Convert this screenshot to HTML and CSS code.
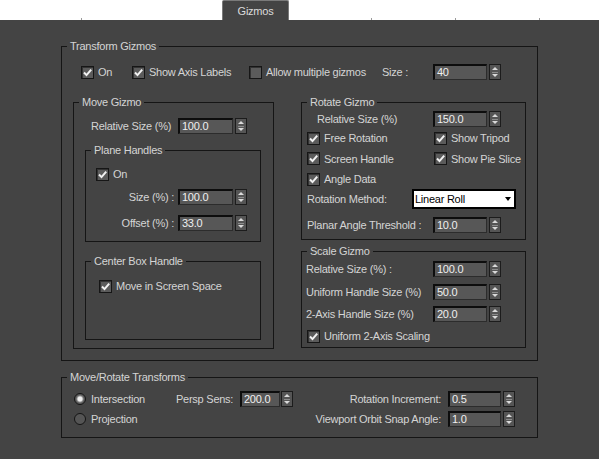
FILE: index.html
```html
<!DOCTYPE html>
<html lang="en">
<head>
  <meta charset="UTF-8">
  <title>Gizmos</title>
  <link rel="stylesheet" href="styles.css">
</head>
<body>

  <div class="tabbar">
    <i class="tick t1"></i>
    <div class="tab">Gizmos</div>
    <i class="tick t2"></i><i class="tick t3"></i><i class="tick t4"></i>
  </div>

  <div class="panel">
    <fieldset class="grp wide">
      <legend>Transform Gizmos</legend>
      <div class="tg-body">
        <div class="row top-row">
          <label class="chk c-on"><span class="box on"></span>On</label>
          <label class="chk c-axis"><span class="box on"></span>Show Axis Labels</label>
          <label class="chk c-multi"><span class="box"></span>Allow multiple gizmos</label>
          <span class="lbl size-lbl">Size :</span>
          <span class="num">40</span><span class="spin"></span>
        </div>

        <div class="cols">
          <fieldset class="grp move">
            <legend>Move Gizmo</legend>
            <div class="move-body">
              <div class="row move-rel">
                <span class="lbl">Relative Size (%)</span>
                <span class="num w55">100.0</span><span class="spin"></span>
              </div>

              <fieldset class="grp plane">
                <legend>Plane Handles</legend>
                <div class="plane-body">
                  <label class="chk"><span class="box on"></span>On</label>
                  <div class="row plane-row">
                    <span class="lbl">Size (%) :</span>
                    <span class="num w55">100.0</span><span class="spin"></span>
                  </div>
                  <div class="row plane-row second">
                    <span class="lbl">Offset (%) :</span>
                    <span class="num w55">33.0</span><span class="spin"></span>
                  </div>
                </div>
              </fieldset>

              <fieldset class="grp plane center">
                <legend>Center Box Handle</legend>
                <div class="center-body">
                  <label class="chk"><span class="box on"></span>Move in Screen Space</label>
                </div>
              </fieldset>
            </div>
          </fieldset>

          <div class="right-col">
            <fieldset class="grp rotate">
              <legend>Rotate Gizmo</legend>
              <div class="rot-body">
                <div class="row rot-rel">
                  <span class="lbl">Relative Size (%)</span>
                  <span class="num">150.0</span><span class="spin"></span>
                </div>
                <div class="chk-grid">
                  <label class="chk"><span class="box on"></span>Free Rotation</label>
                  <label class="chk"><span class="box on"></span>Show Tripod</label>
                  <label class="chk"><span class="box on"></span>Screen Handle</label>
                  <label class="chk"><span class="box on"></span>Show Pie Slice</label>
                  <label class="chk"><span class="box on"></span>Angle Data</label>
                </div>
                <div class="row rot-method">
                  <span class="lbl">Rotation Method:</span>
                  <span class="drop">Linear Roll<i class="arr"></i></span>
                </div>
                <div class="row rot-planar">
                  <span class="lbl">Planar Angle Threshold :</span>
                  <span class="num">10.0</span><span class="spin"></span>
                </div>
              </div>
            </fieldset>

            <fieldset class="grp scale">
              <legend>Scale Gizmo</legend>
              <div class="scale-body">
                <div class="row">
                  <span class="lbl">Relative Size (%) :</span>
                  <span class="num">100.0</span><span class="spin"></span>
                </div>
                <div class="row gap7">
                  <span class="lbl">Uniform Handle Size (%)</span>
                  <span class="num">50.0</span><span class="spin"></span>
                </div>
                <div class="row gap6">
                  <span class="lbl">2-Axis Handle Size (%)</span>
                  <span class="num">20.0</span><span class="spin"></span>
                </div>
                <label class="chk scale-chk"><span class="box on"></span>Uniform 2-Axis Scaling</label>
              </div>
            </fieldset>
          </div>
        </div>
      </div>
    </fieldset>

    <fieldset class="grp wide mrt">
      <legend>Move/Rotate Transforms</legend>
      <div class="mrt-body">
        <label class="rad"><span class="dot on"></span>Intersection</label>
        <span class="lbl">Persp Sens:</span>
        <span class="num w40">200.0</span><span class="spin s1"></span>
        <span class="lbl rlbl">Rotation Increment:</span>
        <span class="num w53">0.5</span><span class="spin"></span>

        <label class="rad"><span class="dot"></span>Projection</label>
        <span class="lbl rlbl r2">Viewport Orbit Snap Angle:</span>
        <span class="num w53">1.0</span><span class="spin"></span>
      </div>
    </fieldset>
  </div>

</body>
</html>
```

FILE: styles.css
```css
* { box-sizing: border-box; }
html, body {
  margin: 0;
  width: 599px; height: 459px;
  overflow: hidden;
  background: #444;
  font-family: "Liberation Sans", Arial, sans-serif;
  font-size: 11px;
  letter-spacing: -0.25px;
  color: #d4d4d4;
}

/* tab strip */
.tabbar {
  height: 20px;
  background: #fff;
  display: flex;
  align-items: flex-end;
}
.tick { display: block; width: 1px; height: 2px; background: #9a9a9a; }
.t1 { margin-left: 81px; }
.t2 { margin-left: 82px; }
.t3, .t4 { margin-left: 83px; }
.tab {
  margin-left: 140px;
  width: 67px; height: 20px;
  background: #444;
  border: 1px solid #7a7a7a;
  border-bottom: none;
  border-radius: 2px 2px 0 0;
  color: #dcdcdc;
  text-align: center;
  line-height: 20px;
}

/* groups */
.panel { padding: 19px 0 0 61px; }
.grp {
  margin: 0;
  padding: 0;
  min-width: 0;
  border: 1px solid #151515;
}
legend {
  margin-left: 5px;
  padding: 0 3px;
  height: 14px;
  line-height: 14px;
}
.wide { width: 477px; }
.tg-body { height: 307px; padding: 11px 0 0 11px; }

.row { display: flex; align-items: center; height: 16px; }
.lbl { white-space: nowrap; flex: none; }

.chk { display: flex; align-items: center; height: 14px; white-space: nowrap; }
.box {
  flex: none;
  width: 13px; height: 13px;
  margin-right: 4px;
  border: 1px solid #161616;
  background: #5b5b5b;
  box-shadow: inset 1px 1px 0 #333;
}
.box.on {
  background: #5b5b5b url("data:image/svg+xml,%3Csvg xmlns='http://www.w3.org/2000/svg' width='11' height='11' viewBox='0 0 11 11'%3E%3Cpath d='M2 5.5l2.5 2.6L9.2 2.6' fill='none' stroke='%23f2f2f2' stroke-width='2'/%3E%3C/svg%3E") center / 11px 11px no-repeat;
}

.num {
  flex: none;
  display: block;
  width: 54px; height: 16px;
  margin-left: 2px;
  padding-left: 2px;
  border: 1px solid #2c2c2c;
  border-top: 2px solid #0d0d0d;
  border-left: 2px solid #0d0d0d;
  background: #575757;
  color: #f0f0f0;
  line-height: 13px;
}
.w55 { width: 55px; }
.w53 { width: 53px; }
.w40 { width: 40px; }
.spin {
  flex: none;
  display: flex;
  flex-direction: column;
  align-items: center;
  justify-content: center;
  gap: 4px;
  width: 12px; height: 16px;
  margin-left: 2px;
  border: 1px solid #1c1c1c;
  background: #555 linear-gradient(#8c8c8c, #8c8c8c) center / 6px 1px no-repeat;
}
.spin::before, .spin::after {
  content: "";
  border-left: 3px solid transparent;
  border-right: 3px solid transparent;
}
.spin::before { border-bottom: 3px solid #dadada; }
.spin::after { border-top: 3px solid #dadada; }

/* top row */
.top-row { margin-left: 8px; }
.c-on { width: 51px; }
.c-axis { width: 117px; }
.c-multi { width: 133px; }
.size-lbl { width: 49px; }

.cols { display: flex; align-items: flex-start; gap: 27px; margin-top: 15px; }

/* move gizmo */
.move { width: 201px; }
.move-body { height: 239px; padding: 9px 0 0 11px; }
.move-rel { margin-left: 6px; }
.move-rel .lbl { width: 85px; }
.plane { width: 176px; margin-top: 9px; }
.plane-body { height: 84px; padding: 10px 0 0 10px; }
.plane-row { margin-top: 8px; }
.plane-row.second { margin-top: 10px; }
.plane-row .lbl { width: 78px; text-align: right; }
.plane-row .num { margin-left: 4px; }
.center { margin-top: 12px; }
.center-body { height: 71px; padding: 11px 0 0 13px; }

/* rotate gizmo */
.right-col { display: flex; flex-direction: column; width: 225px; }
.rotate { width: 225px; }
.rot-body { height: 130px; padding-top: 2px; }
.rot-rel { margin-left: 15px; }
.rot-rel .lbl { width: 114px; }
.chk-grid {
  display: grid;
  grid-template-columns: 127px auto;
  grid-template-rows: repeat(3, 14px);
  row-gap: 6.5px;
  margin: 4px 0 0 5px;
}
.rot-method { height: 20px; margin: 3px 0 0 5px; }
.rot-method .lbl { width: 105px; }
.drop {
  display: flex;
  align-items: center;
  justify-content: space-between;
  width: 104px; height: 20px;
  padding-left: 1px;
  border: 2px solid #000;
  background: #fff;
  color: #000;
}
.arr {
  border-left: 3.5px solid transparent;
  border-right: 3.5px solid transparent;
  border-top: 4px solid #000;
  margin-right: 3px;
}
.rot-planar { margin: 8px 0 0 5px; }
.rot-planar .lbl { width: 124px; }

/* scale gizmo */
.scale { width: 225px; margin-top: 4px; }
.scale-body { height: 89px; padding: 3px 0 0 4px; }
.scale .lbl { width: 125px; }
.gap7 { margin-top: 7px; }
.gap6 { margin-top: 6px; }
.scale-chk { margin: 7px 0 0 1px; }

/* move/rotate transforms */
.mrt { margin-top: 9px; }
.mrt-body {
  height: 53px;
  padding: 7px 22px 0 12px;
  display: grid;
  grid-template-columns: 102px 64px 40px 13px 1fr 53px 14px;
  grid-template-rows: 16px 16px;
  row-gap: 4px;
  align-items: center;
}
.mrt-body .num { margin-left: 0; }
.mrt-body .spin.s1 { margin-left: 1px; }
.rlbl { text-align: right; padding-right: 7px; }
.r2 { grid-column: 5; }
.rad { display: flex; align-items: center; white-space: nowrap; }
.dot {
  flex: none;
  width: 12px; height: 12px;
  margin-right: 5px;
  border-radius: 50%;
  border: 1px solid #151515;
  background: #555;
}
.dot.on { background: radial-gradient(circle, #f0f0f0 0 2px, #9a9a9a 3px, #5a5a5a 4px); }
```
